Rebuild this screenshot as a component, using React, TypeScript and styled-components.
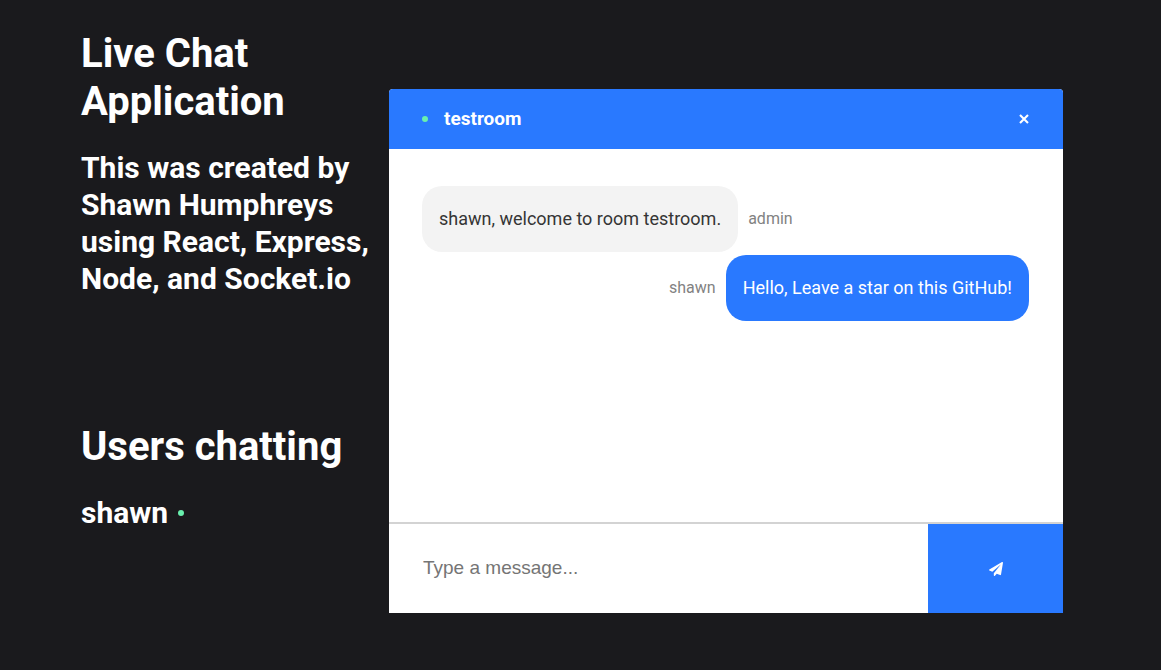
import React from "react";
import styled, { createGlobalStyle } from "styled-components";

const GlobalStyle = createGlobalStyle`
  *, *::before, *::after { box-sizing: border-box; }
  body {
    margin: 0;
    background: #1a1a1d;
    font-family: Roboto, "Liberation Sans", sans-serif;
  }
`;

const Page = styled.main`
  display: flex;
  align-items: flex-start;
  min-height: 100vh;
  padding: 0 98px 0 81px;
  color: #ffffff;
`;

const Sidebar = styled.aside`
  flex: 0 0 308px;
  padding-top: 30px;
`;

const Section = styled.section`
  & + & {
    margin-top: 126px;
  }
`;

const Title = styled.h1`
  margin: 0 0 23px;
  font-size: 40px;
  line-height: 48px;
  font-weight: 700;
`;

const Subtitle = styled.h2`
  margin: 0;
  font-size: 30px;
  line-height: 37px;
  font-weight: 700;
`;

const UserList = styled.ul`
  margin: 0;
  padding: 0;
  list-style: none;
`;

const User = styled.li`
  display: flex;
  align-items: center;
  gap: 10px;
  font-size: 30px;
  line-height: 37px;
  font-weight: 700;
`;

const OnlineDot = styled.span`
  flex: none;
  width: 6px;
  height: 6px;
  border-radius: 50%;
  background: #69f0ae;
`;

const ChatPanel = styled.section`
  flex: 1;
  min-width: 0;
  display: flex;
  flex-direction: column;
  margin: 89px 0 57px;
  border-radius: 4px 4px 0 0;
  overflow: hidden;
  background: #ffffff;
`;

const InfoBar = styled.header`
  display: flex;
  align-items: center;
  justify-content: space-between;
  height: 60px;
  padding: 0 33px;
  background: #2979ff;
`;

const Room = styled.div`
  display: flex;
  align-items: center;
  gap: 16px;
`;

const RoomName = styled.h3`
  margin: 0;
  font-size: 19px;
  line-height: 22px;
  font-weight: 700;
`;

const CloseLink = styled.a`
  display: flex;
  padding: 1px;
  color: #ffffff;
`;

const Messages = styled.div`
  display: flex;
  flex-direction: column;
  gap: 3px;
  min-height: 373px;
  padding: 37px 34px 20px 33px;
`;

const MessageRow = styled.div<{ $own?: boolean }>`
  display: flex;
  flex-direction: ${({ $own }) => ($own ? "row-reverse" : "row")};
  align-items: center;
  gap: 10px;
`;

const Bubble = styled.p<{ $own?: boolean }>`
  margin: 0;
  padding: 22px 17px;
  border-radius: 20px;
  font-size: 18px;
  line-height: 22px;
  color: ${({ $own }) => ($own ? "#ffffff" : "#353535")};
  background: ${({ $own }) => ($own ? "#2979ff" : "#f3f3f3")};
`;

const Sender = styled.span`
  font-size: 16px;
  line-height: 20px;
  color: #828282;
`;

const Composer = styled.form`
  display: flex;
  border-top: 2px solid #d3d3d3;
`;

const MessageInput = styled.input`
  flex: 1;
  min-width: 0;
  height: 89px;
  padding: 0 34px 2px;
  border: 0;
  outline: 0;
  font-family: "Liberation Sans", Arial, sans-serif;
  font-size: 19px;
  color: #353535;
  background: #ffffff;

  &::placeholder {
    color: #757575;
  }
`;

const SendButton = styled.button`
  flex: 0 0 20%;
  display: flex;
  align-items: center;
  justify-content: center;
  padding: 0;
  border: 0;
  color: #ffffff;
  background: #2979ff;
  cursor: pointer;
`;

const messages = [
  { user: "admin", text: "shawn, welcome to room testroom." },
  { user: "shawn", text: "Hello, Leave a star on this GitHub!", own: true },
];

const users = ["shawn"];

export default function App() {
  return (
    <>
      <GlobalStyle />
      <Page>
        <Sidebar>
          <Section>
            <Title>Live Chat Application</Title>
            <Subtitle>
              This was created by Shawn Humphreys using React, Express, Node, and Socket.io
            </Subtitle>
          </Section>
          <Section>
            <Title as="h2">Users chatting</Title>
            <UserList>
              {users.map((name) => (
                <User key={name}>
                  {name}
                  <OnlineDot />
                </User>
              ))}
            </UserList>
          </Section>
        </Sidebar>
        <ChatPanel>
          <InfoBar>
            <Room>
              <OnlineDot />
              <RoomName>testroom</RoomName>
            </Room>
            <CloseLink href="#" aria-label="Leave room">
              <svg width="10" height="10" viewBox="0 0 10 10" aria-hidden="true">
                <path d="M1 1l8 8M9 1l-8 8" stroke="currentColor" strokeWidth="2.1" />
              </svg>
            </CloseLink>
          </InfoBar>
          <Messages>
            {messages.map(({ user, text, own }) => (
              <MessageRow key={text} $own={own}>
                <Bubble $own={own}>{text}</Bubble>
                <Sender>{user}</Sender>
              </MessageRow>
            ))}
          </Messages>
          <Composer onSubmit={(event) => event.preventDefault()}>
            <MessageInput type="text" placeholder="Type a message..." aria-label="Message" />
            <SendButton type="submit" aria-label="Send">
              <svg width="14" height="14" viewBox="0 0 512 512" aria-hidden="true">
                <path
                  fill="currentColor"
                  d="M476 3.2L12.500 270.600c-18.100 10.400-15.800 35.600 2.200 43.200L121 358.400l287.300-253.200c5.500-4.900 13.300 2.600 8.600 8.300L176 407v80.500c0 23.600 28.500 32.900 42.500 15.800L282 426l124.600 52.200c14.200 6 30.400-2.900 33-18.200l72-432C515 7.800 493.300-6.800 476 3.200z"
                />
              </svg>
            </SendButton>
          </Composer>
        </ChatPanel>
      </Page>
    </>
  );
}
